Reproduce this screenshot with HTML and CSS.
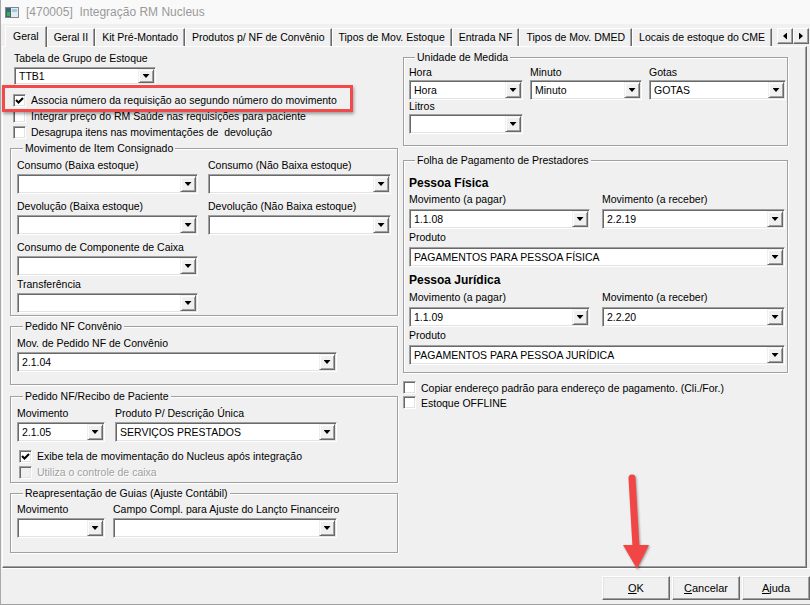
FILE: index.html
```html
<!DOCTYPE html>
<html lang="pt-BR">
<head>
<meta charset="utf-8">
<title>Integração RM Nucleus</title>
<link rel="stylesheet" href="styles.css">
</head>
<body>
<div class="window">
	<div class="titlebar">
		<svg class="app-icon" width="14" height="11" viewBox="0 0 14 11">
			<rect x="0.5" y="0.5" width="13" height="10" fill="#e4ecf1" stroke="#7d8a94"/>
			<rect x="1" y="1" width="5" height="9" fill="#3d6873"/>
			<rect x="2" y="5" width="3" height="4" fill="#3faa58"/>
			<rect x="7" y="2" width="5" height="3" fill="#9fc9e0"/>
		</svg>
		<span class="title">[470005]&nbsp; Integração RM Nucleus</span>
	</div>

	<div class="tabs">
		<div class="tab active">Geral</div>
		<div class="tab">Geral II</div>
		<div class="tab">Kit Pré-Montado</div>
		<div class="tab">Produtos p/ NF de Convênio</div>
		<div class="tab">Tipos de Mov. Estoque</div>
		<div class="tab">Entrada NF</div>
		<div class="tab">Tipos de Mov. DMED</div>
		<div class="tab">Locais de estoque do CME</div>
		<div class="tab-scroll">
			<span class="scroll-btn"><i class="tri-left"></i></span>
			<span class="scroll-btn"><i class="tri-right"></i></span>
		</div>
	</div>

	<div class="panel">
		<!-- coluna esquerda -->
		<div class="col col-left">
			<div class="top-fields">
				<div class="label">Tabela de Grupo de Estoque</div>
				<div class="combo combo-small"><span class="value">TTB1</span><span class="drop"></span></div>
			</div>
			<div class="checks">
				<div class="check"><span class="box"><svg width="11" height="11" viewBox="0 0 11 11"><polyline points="2,5 4.5,7.5 9,3" fill="none" stroke="#000" stroke-width="2"/></svg></span>Associa número da requisição ao segundo número do movimento</div>
				<div class="check"><span class="box"></span>Integrar preço do RM Saúde nas requisições para paciente</div>
				<div class="check"><span class="box"></span>Desagrupa itens nas movimentações de&nbsp; devolução</div>
			</div>

			<fieldset class="group g-consignado">
				<legend>Movimento de Item Consignado</legend>
				<div class="grid grid-consignado">
					<div class="field">
						<div class="label">Consumo (Baixa estoque)</div>
						<div class="combo"><span class="value"></span><span class="drop"></span></div>
					</div>
					<div class="field">
						<div class="label">Consumo (Não Baixa estoque)</div>
						<div class="combo"><span class="value"></span><span class="drop"></span></div>
					</div>
					<div class="field">
						<div class="label">Devolução (Baixa estoque)</div>
						<div class="combo"><span class="value"></span><span class="drop"></span></div>
					</div>
					<div class="field">
						<div class="label">Devolução (Não Baixa estoque)</div>
						<div class="combo"><span class="value"></span><span class="drop"></span></div>
					</div>
					<div class="field">
						<div class="label">Consumo de Componente de Caixa</div>
						<div class="combo"><span class="value"></span><span class="drop"></span></div>
					</div>
					<div></div>
					<div class="field close">
						<div class="label">Transferência</div>
						<div class="combo"><span class="value"></span><span class="drop"></span></div>
					</div>
				</div>
			</fieldset>

			<fieldset class="group g-convenio">
				<legend>Pedido NF Convênio</legend>
				<div class="grid grid-convenio">
					<div class="field">
						<div class="label">Mov. de Pedido NF de Convênio</div>
						<div class="combo"><span class="value">2.1.04</span><span class="drop"></span></div>
					</div>
				</div>
			</fieldset>

			<fieldset class="group g-paciente">
				<legend>Pedido NF/Recibo de Paciente</legend>
				<div class="grid grid-paciente">
					<div class="field">
						<div class="label">Movimento</div>
						<div class="combo"><span class="value">2.1.05</span><span class="drop"></span></div>
					</div>
					<div class="field">
						<div class="label">Produto P/ Descrição Única</div>
						<div class="combo"><span class="value">SERVIÇOS PRESTADOS</span><span class="drop"></span></div>
					</div>
				</div>
				<div class="checks inner">
					<div class="check"><span class="box"><svg width="11" height="11" viewBox="0 0 11 11"><polyline points="2,5 4.5,7.5 9,3" fill="none" stroke="#000" stroke-width="2"/></svg></span>Exibe tela de movimentação do Nucleus após integração</div>
					<div class="check disabled"><span class="box"></span>Utiliza o controle de caixa</div>
				</div>
			</fieldset>

			<fieldset class="group g-guias">
				<legend>Reapresentação de Guias (Ajuste Contábil)</legend>
				<div class="grid grid-guias">
					<div class="field">
						<div class="label">Movimento</div>
						<div class="combo"><span class="value"></span><span class="drop"></span></div>
					</div>
					<div class="field">
						<div class="label">Campo Compl. para Ajuste do Lançto Financeiro</div>
						<div class="combo"><span class="value"></span><span class="drop"></span></div>
					</div>
				</div>
			</fieldset>
		</div>

		<!-- coluna direita -->
		<div class="col col-right">
			<fieldset class="group g-medida">
				<legend>Unidade de Medida</legend>
				<div class="grid grid-medida">
					<div class="field">
						<div class="label">Hora</div>
						<div class="combo"><span class="value">Hora</span><span class="drop"></span></div>
					</div>
					<div class="field">
						<div class="label">Minuto</div>
						<div class="combo"><span class="value">Minuto</span><span class="drop"></span></div>
					</div>
					<div class="field">
						<div class="label">Gotas</div>
						<div class="combo"><span class="value">GOTAS</span><span class="drop"></span></div>
					</div>
					<div class="field">
						<div class="label">Litros</div>
						<div class="combo"><span class="value"></span><span class="drop"></span></div>
					</div>
				</div>
			</fieldset>

			<fieldset class="group g-folha">
				<legend>Folha de Pagamento de Prestadores</legend>
				<div class="heading">Pessoa Física</div>
				<div class="grid grid-folha">
					<div class="field">
						<div class="label">Movimento (a pagar)</div>
						<div class="combo"><span class="value">1.1.08</span><span class="drop"></span></div>
					</div>
					<div class="field">
						<div class="label">Movimento (a receber)</div>
						<div class="combo"><span class="value">2.2.19</span><span class="drop"></span></div>
					</div>
					<div class="field wide">
						<div class="label">Produto</div>
						<div class="combo"><span class="value">PAGAMENTOS PARA PESSOA FÍSICA</span><span class="drop"></span></div>
					</div>
				</div>
				<div class="heading">Pessoa Jurídica</div>
				<div class="grid grid-folha">
					<div class="field">
						<div class="label">Movimento (a pagar)</div>
						<div class="combo"><span class="value">1.1.09</span><span class="drop"></span></div>
					</div>
					<div class="field">
						<div class="label">Movimento (a receber)</div>
						<div class="combo"><span class="value">2.2.20</span><span class="drop"></span></div>
					</div>
					<div class="field wide">
						<div class="label">Produto</div>
						<div class="combo"><span class="value">PAGAMENTOS PARA PESSOA JURÍDICA</span><span class="drop"></span></div>
					</div>
				</div>
			</fieldset>

			<div class="checks right">
				<div class="check"><span class="box"></span>Copiar endereço padrão para endereço de pagamento. (Cli./For.)</div>
				<div class="check"><span class="box"></span>Estoque OFFLINE</div>
			</div>
		</div>
	</div>

	<div class="buttonbar">
		<div class="btn"><u>O</u>K</div>
		<div class="btn"><u>C</u>ancelar</div>
		<div class="btn"><u>A</u>juda</div>
	</div>

	<div class="highlight"></div>
	<svg class="pointer" width="46" height="106" viewBox="0 0 46 106">
		<line x1="17" y1="8" x2="21" y2="77" stroke="#f24646" stroke-width="7" stroke-linecap="round"/>
		<polygon points="8,75 34,75 22,99" fill="#f24646"/>
	</svg>
</div>
</body>
</html>
```

FILE: styles.css
```css
body {
	margin: 0;
	background: #f0f0f0;
	font-family: "Liberation Sans", Arial, sans-serif;
	font-size: 10.5px;
	color: #000;
}

.window {
	position: relative;
	width: 810px;
	height: 605px;
	box-sizing: border-box;
	border-left: 1px solid #a9a9a9;
	border-bottom: 1px solid #a0a0a0;
	overflow: hidden;
	display: flex;
	flex-direction: column;
}

/* barra de titulo */
.titlebar {
	height: 24px;
	flex: none;
	background: #f9f9f9;
	display: flex;
	align-items: center;
	padding-left: 4px;
	gap: 7px;
}
.app-icon {
	display: block;
}
.title {
	font-size: 12px;
	color: #999;
}

/* abas */
.tabs {
	height: 22px;
	flex: none;
	display: flex;
	align-items: flex-end;
	padding-left: 4px;
	position: relative;
	z-index: 1;
}
.tab {
	height: 18px;
	line-height: 17px;
	padding: 0 6px;
	box-sizing: border-box;
	border-top: 1px solid #fff;
	border-left: 1px solid #fff;
	border-right: 1px solid #696969;
	box-shadow: inset -1px 0 #a0a0a0;
	white-space: nowrap;
}
.tab.active {
	height: 21px;
	line-height: 18px;
	margin-bottom: -1px;
	padding: 0 7px;
	background: #f0f0f0;
}
.tab:last-of-type {
	padding-right: 8px;
}
.tab-scroll {
	display: flex;
	margin-left: auto;
	margin-bottom: 2px;
	margin-right: 1px;
}
.scroll-btn {
	width: 16px;
	height: 16px;
	box-sizing: border-box;
	border: 1px solid;
	border-color: #fff #696969 #696969 #fff;
	box-shadow: inset -1px -1px #a0a0a0;
	display: flex;
	align-items: center;
	justify-content: center;
}
.tri-left,
.tri-right {
	width: 4px;
	height: 7px;
	background: #000;
}
.tri-left {
	clip-path: polygon(100% 0, 100% 100%, 0 50%);
}
.tri-right {
	clip-path: polygon(0 0, 0 100%, 100% 50%);
}

/* painel da aba */
.panel {
	height: 522px;
	flex: none;
	margin: 0 3px 0 1px;
	box-sizing: border-box;
	border-top: 1px solid #fff;
	border-left: 1px solid #fff;
	border-right: 1px solid #696969;
	border-bottom: 1px solid #696969;
	box-shadow: inset -1px -1px #a0a0a0;
	padding: 4px 0 0 7px;
	display: flex;
	gap: 5px;
	align-items: flex-start;
}
.col-left {
	width: 388px;
}
.col-right {
	width: 385px;
}

.top-fields {
	padding: 1px 0 0 4px;
}

.label {
	height: 13px;
	line-height: 13px;
	margin-bottom: 2px;
	white-space: nowrap;
}

/* combo */
.combo {
	height: 20px;
	box-sizing: border-box;
	background: #fff;
	border: 1px solid;
	border-color: #a0a0a0 #fff #fff #a0a0a0;
	box-shadow: inset 1px 1px #696969, inset -1px -1px #e3e3e3;
	display: flex;
	padding: 1px;
}
.combo-small {
	width: 142px;
	height: 18px;
}
.combo .value {
	flex: 1;
	padding-left: 3px;
	line-height: 16px;
	white-space: nowrap;
	overflow: hidden;
}
.combo-small .value {
	line-height: 14px;
}
.drop {
	width: 16px;
	flex: none;
	background: #f0f0f0;
	box-sizing: border-box;
	border: 1px solid;
	border-color: #f0f0f0 #696969 #696969 #f0f0f0;
	box-shadow: inset 1px 1px #fff, inset -1px -1px #a0a0a0;
	display: flex;
	align-items: center;
	justify-content: center;
}
.drop::after {
	content: "";
	width: 7px;
	height: 4px;
	background: #000;
	clip-path: polygon(0 0, 100% 0, 50% 100%);
}

/* checkbox */
.checks {
	margin-top: 7px;
	padding-left: 3px;
}
.checks.inner {
	margin-top: 6px;
	padding-left: 2px;
}
.checks.right {
	margin-top: 7px;
	padding-left: 0;
}
.check {
	height: 16px;
	display: flex;
	align-items: center;
	gap: 5px;
	white-space: nowrap;
}
.checks.right .check {
	height: 15px;
}
.box {
	width: 13px;
	height: 13px;
	flex: none;
	box-sizing: border-box;
	background: #fff;
	border: 1px solid;
	border-color: #a0a0a0 #fff #fff #a0a0a0;
	box-shadow: inset 1px 1px #696969, inset -1px -1px #e3e3e3;
	display: flex;
	align-items: center;
	justify-content: center;
}
.box svg {
	display: block;
}
.check.disabled {
	color: #a0a0a0;
	text-shadow: 1px 1px #fff;
}
.check.disabled .box {
	background: #f0f0f0;
}

/* group box */
.group {
	margin: 0;
	padding: 4px 6px 2px;
	min-width: 0;
	border: 1px solid #a0a0a0;
	box-shadow: 1px 1px 0 #fff, inset 1px 1px 0 #fff;
}
.group legend {
	margin-left: 6px;
	padding: 0 2px;
	line-height: 13px;
	background: #f0f0f0;
}
.g-consignado {
	margin-top: 2px;
}
.g-convenio {
	margin-top: 4px;
	padding-bottom: 12px;
}
.g-paciente {
	margin-top: 5px;
}
.g-guias {
	margin-top: 4px;
	padding-top: 3px;
	padding-bottom: 14px;
}
.g-medida {
	padding: 2px 2px 11px 5px;
}
.g-folha {
	margin-top: 8px;
	padding: 9px 2px 7px 5px;
}

.grid {
	display: grid;
}
.grid-consignado {
	grid-template-columns: 181px 183px;
	column-gap: 10px;
	row-gap: 6px;
}
.field.close {
	margin-top: -4px;
}
.grid-convenio {
	grid-template-columns: 320px;
}
.grid-paciente {
	grid-template-columns: 88px 222px;
	column-gap: 10px;
}
.grid-guias {
	grid-template-columns: 88px 224px;
	column-gap: 8px;
}
.grid-medida {
	grid-template-columns: 114px 112px 137px;
	column-gap: 7px;
}
.grid-medida .label {
	margin-bottom: 1px;
}
.grid-folha {
	grid-template-columns: 181px 1fr;
	column-gap: 12px;
	row-gap: 2px;
}
.grid-folha .label {
	margin-bottom: 3px;
}
.field.wide {
	grid-column: 1 / 3;
}
.heading {
	font-size: 12px;
	font-weight: bold;
	line-height: 14px;
	margin-bottom: 3px;
}
.grid-folha + .heading {
	margin-top: 6px;
	margin-bottom: 4px;
}

/* botoes */
.buttonbar {
	flex: 1;
	border-top: 1px solid #fff;
	display: flex;
	justify-content: flex-end;
	align-items: flex-start;
	padding-top: 7px;
	gap: 2px;
}
.btn {
	width: 68px;
	height: 24px;
	box-sizing: border-box;
	border: 1px solid;
	border-color: #fff #696969 #696969 #fff;
	box-shadow: inset -1px -1px #a0a0a0, inset 1px 1px #e3e3e3;
	text-align: center;
	line-height: 22px;
	font-size: 11px;
}

/* marcacoes em vermelho */
.highlight {
	position: absolute;
	left: 1px;
	top: 85px;
	width: 351px;
	height: 27px;
	box-sizing: border-box;
	border: 3px solid #f04a4a;
	box-shadow: 1px 2px 3px rgba(0, 0, 0, 0.35);
	z-index: 2;
}
.pointer {
	position: absolute;
	left: 614px;
	top: 470px;
	z-index: 2;
	filter: drop-shadow(1px 1px 1px rgba(0, 0, 0, 0.35));
}
```
